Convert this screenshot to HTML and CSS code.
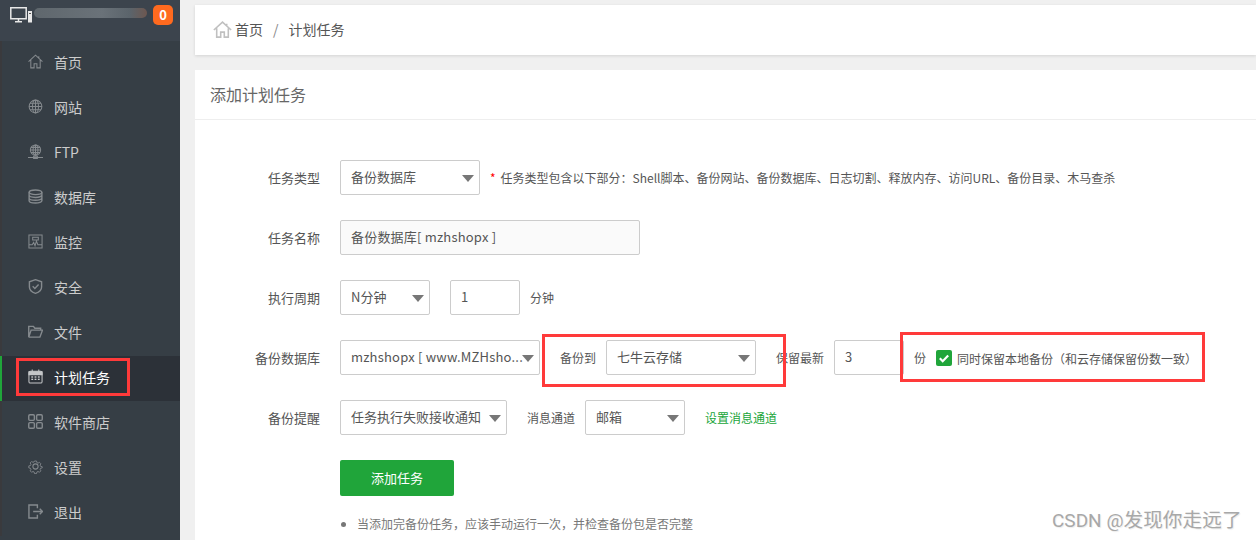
FILE: index.html
```html
<!DOCTYPE html>
<html>
  <head>
    <meta charset="utf-8">
    <title>计划任务</title>
    <link rel="stylesheet" href="styles.css">
  </head>
  <body>
    <div class="page">
      <aside class="sidebar">
        <div class="brand">
          <svg class="brand-icon" viewBox="0 0 22 16" width="22" height="16">
            <path d="M.8.800h15.400v11H.8z" fill="none" stroke="#e8e8e8" stroke-width="1.500"/>
            <path d="M5 14.800h7M8.500 12v2.500" stroke="#e8e8e8" stroke-width="1.500"/>
            <rect x="18" y="4" width="4" height="11.500" fill="#e8e8e8"/>
            <rect x="19" y="6" width="2" height="1" fill="#555"/>
          </svg>
          <span class="brand-blur"></span>
          <span class="badge">0</span>
        </div>
        <nav class="menu">
          <a class="menu-item">
            <svg viewBox="0 0 16 16"><path d="M.6 8.200 8 1.300l7.400 6.900M3 6.500v8.300h3.500v-4.500h3v4.500H13V6.500M11.500 2.300v2"/></svg>
            <span>首页</span>
          </a>
          <a class="menu-item">
            <svg viewBox="0 0 16 16"><circle cx="8" cy="8" r="6.800"/><ellipse cx="8" cy="8" rx="3.200" ry="6.800"/><path d="M8 1.200v13.600M1.200 8h13.600M2.200 4.600h11.600M2.200 11.400h11.600"/></svg>
            <span>网站</span>
          </a>
          <a class="menu-item">
            <svg viewBox="0 0 16 16"><circle cx="8" cy="6.500" r="5.500"/><ellipse cx="8" cy="6.500" rx="2.600" ry="5.500"/><path d="M8 1v11M2.500 6.500h11M3.200 3.800h9.600M3.200 9.200h9.600M0 14.500h16"/><rect x="6" y="13" width="4" height="2.500"/></svg>
            <span>FTP</span>
          </a>
          <a class="menu-item">
            <svg class="bold" viewBox="0 0 16 16"><ellipse cx="8" cy="3.500" rx="6.800" ry="2.500"/><path d="M1.200 3.500v9c0 1.400 3 2.500 6.800 2.500s6.800-1.100 6.800-2.500v-9M1.200 6.500C1.200 7.900 4.200 9 8 9s6.800-1.100 6.800-2.500M1.200 9.500c0 1.400 3 2.500 6.800 2.500s6.800-1.100 6.800-2.500"/></svg>
            <span>数据库</span>
          </a>
          <a class="menu-item">
            <svg viewBox="0 0 16 16"><path d="M1 1h14v14H1zM1 11.500h3.500l1.500-2.500 1.500 3.500 1.500-5 1.500 4h4.500M5 3.500h6v3H5z"/></svg>
            <span>监控</span>
          </a>
          <a class="menu-item">
            <svg class="bold" viewBox="0 0 16 16"><path d="M8 .7l6.500 2.300v5.500c0 3.200-3 5.600-6.500 6.800-3.500-1.200-6.500-3.600-6.500-6.800V3zM5 7.800l2.300 2.300L11.300 5.800"/></svg>
            <span>安全</span>
          </a>
          <a class="menu-item">
            <svg class="bold" viewBox="0 0 16 16"><path d="M.8 14V2.500h5l1.500 2h6.200v2M.8 14h11.900l2.800-7.500H3.300L.8 14"/></svg>
            <span>文件</span>
          </a>
          <a class="menu-item active">
            <svg viewBox="0 0 16 16"><rect x="1" y="2.500" width="14" height="12.500" rx="1.500"/><path d="M4.500.5v3M11.500.5v3"/><path class="cal-fill" d="M1 3h14v3H1z"/><path class="cal-dots" d="M3.500 8.500h2M7 8.500h2M10.500 8.500h2M3.500 11h2M7 11h2M10.500 11h2"/></svg>
            <span>计划任务</span>
          </a>
          <a class="menu-item">
            <svg class="bold" viewBox="0 0 16 16"><rect x=".8" y=".8" width="6" height="6" rx="1.200"/><rect x="9.200" y=".8" width="6" height="6" rx="1.200"/><rect x=".8" y="9.200" width="6" height="6" rx="1.200"/><rect x="9.200" y="9.200" width="6" height="6" rx="1.200"/></svg>
            <span>软件商店</span>
          </a>
          <a class="menu-item">
            <svg viewBox="0 0 16 16"><path d="M6.700 1h2.600l.4 2 1.500.7 1.800-1 1.800 1.800-1 1.800.7 1.500 2 .4v1.600l-2 .4-.7 1.500 1 1.800-1.800 1.800-1.800-1-1.500.7-.4 2H6.700l-.4-2-1.500-.7-1.800 1-1.800-1.800 1-1.800-.7-1.500-2-.4V7.200l2-.4.700-1.500-1-1.800 1.800-1.800 1.800 1 1.500-.7z" transform="translate(1.300 1.300) scale(.84)"/><circle cx="8" cy="8" r="2.800"/></svg>
            <span>设置</span>
          </a>
          <a class="menu-item">
            <svg class="bold" viewBox="0 0 16 16"><path d="M10 4.500V1H1v14h9v-3.500M5.500 8h10M12.500 5l3 3-3 3"/></svg>
            <span>退出</span>
          </a>
        </nav>
      </aside>

      <main class="content">
        <div class="crumbs">
          <svg class="crumb-home" viewBox="0 0 18 16" width="19" height="17"><path d="M.8 8.500 9 1l8.200 7.500M3.500 6.800v8.400h3.800v-4.700h3.400v4.700h3.800V6.800M13 2.500v2.500"/></svg>
          <span class="crumb">首页</span>
          <span class="crumb-sep">/</span>
          <span class="crumb">计划任务</span>
        </div>

        <section class="card">
          <h2 class="card-title">添加计划任务</h2>
          <form class="task-form">
            <div class="row">
              <label class="row-label">任务类型</label>
              <div class="select w-140"><select><option>备份数据库</option></select></div>
              <p class="hint"><em>*</em>任务类型包含以下部分：Shell脚本、备份网站、备份数据库、日志切割、释放内存、访问URL、备份目录、木马查杀</p>
            </div>
            <div class="row">
              <label class="row-label">任务名称</label>
              <input class="field readonly latin w-300" type="text" value="备份数据库[ mzhshopx ]" readonly>
            </div>
            <div class="row">
              <label class="row-label">执行周期</label>
              <div class="select w-90"><select><option>N分钟</option></select></div>
              <input class="field w-70 gap-20" type="text" value="1">
              <span class="unit gap-10">分钟</span>
            </div>
            <div class="row">
              <label class="row-label">备份数据库</label>
              <div class="select w-200 latin"><select><option>mzhshopx [ www.MZHsho...</option></select></div>
              <span class="unit gap-20">备份到</span>
              <div class="select w-150 gap-10"><select><option>七牛云存储</option></select></div>
              <span class="unit gap-20">保留最新</span>
              <input class="field w-70 gap-10" type="text" value="3">
              <span class="unit gap-10">份</span>
              <label class="keep-local">
                <span class="check"><svg viewBox="0 0 16 16" width="16" height="16"><path d="M3.800 8.300l2.900 2.900 5.500-5.600" fill="none" stroke="#fff" stroke-width="2.200"/></svg></span>
                同时保留本地备份（和云存储保留份数一致）
              </label>
            </div>
            <div class="row">
              <label class="row-label">备份提醒</label>
              <div class="select w-167"><select><option>任务执行失败接收通知</option></select></div>
              <span class="unit gap-20">消息通道</span>
              <div class="select w-100 gap-10"><select><option>邮箱</option></select></div>
              <a class="link">设置消息通道</a>
            </div>
            <button class="btn-add" type="button">添加任务</button>
            <ul class="notes">
              <li>当添加完备份任务，应该手动运行一次，并检查备份包是否完整</li>
            </ul>
          </form>
        </section>
      </main>

      <div class="mark mark-menu"></div>
      <div class="mark mark-target"></div>
      <div class="mark mark-local"></div>
      <div class="watermark">CSDN @<span class="watermark-name">发现你走远了</span></div>
    </div>
  </body>
</html>
```

FILE: styles.css
```css
* {
  box-sizing: border-box;
}

html, body {
  height: 100%;
}

body {
  margin: 0;
  overflow: hidden;
  background-color: #f0f0f0;
  color: #555;
  font-family: "Noto Sans CJK SC", "Liberation Sans", sans-serif;
  font-size: 13px;
}

.page {
  position: relative;
  display: flex;
  height: 540px;
  overflow: hidden;
}

/* sidebar */
.sidebar {
  flex: 0 0 180px;
  width: 180px;
  background-color: #363e45;
}

.brand {
  display: flex;
  align-items: center;
  height: 41px;
  padding: 0 0 11px 10px;
  background-color: #3c444d;
}

.brand-blur {
  width: 113px;
  height: 10px;
  margin: 0 0 4px 2px;
  border-radius: 5px;
  background: linear-gradient(90deg, #5f676d, #6a7279 60%, #5b646b 85%, #6d5750);
}

.badge {
  width: 20px;
  height: 20px;
  margin-left: 6px;
  border-radius: 5px;
  background-color: #ff6a1f;
  color: #fff;
  font-size: 13px;
  font-weight: 700;
  line-height: 20px;
  text-align: center;
}

.menu-item {
  display: flex;
  align-items: center;
  height: 45px;
  padding: 0 0 4px 26px;
  border-left: 2px solid #3a3a3d;
  color: #ccc;
  font-size: 14px;
}

.menu-item svg {
  flex: none;
  width: 15px;
  height: 15px;
  margin-right: 11px;
  fill: none;
  stroke: #858a8e;
  stroke-width: 1.100;
}

.menu-item svg.bold {
  stroke-width: 1.500;
}

.menu-item.active {
  border-left-color: #20a53a;
  background-color: #2c3138;
  color: #fff;
}

.menu-item.active svg {
  stroke: #c4c6c8;
}

.menu-item .cal-fill {
  fill: #c4c6c8;
}

.menu-item .cal-dots {
  stroke: #fff;
  stroke-dasharray: 2 1;
}

/* content */
.content {
  flex: 1;
  min-width: 0;
  padding: 5px 0 0 15px;
}

.crumbs {
  display: flex;
  align-items: center;
  height: 50px;
  margin-bottom: 15px;
  padding: 0 0 2px 18px;
  background-color: #fff;
  box-shadow: 0 1px 3px rgba(0, 0, 0, .12);
  color: #555;
  font-size: 14px;
}

.crumb-home {
  margin-right: 3px;
  fill: none;
  stroke: #c0c0c0;
  stroke-width: 1.500;
}

.crumb-sep {
  margin: 0 10px;
  color: #888;
}

.card {
  height: 480px;
  background-color: #fff;
}

.card-title {
  height: 50px;
  margin: 0;
  padding-left: 15px;
  border-bottom: 1px solid #eee;
  color: #666;
  font-size: 16px;
  font-weight: 400;
  line-height: 48px;
}

.task-form {
  padding: 40px 0 0 15px;
}

.row {
  display: flex;
  align-items: center;
  height: 35px;
  margin-bottom: 25px;
}

.row-label {
  flex: none;
  width: 110px;
  margin-right: 20px;
  color: #555;
  text-align: right;
}

.select {
  position: relative;
  flex: none;
  height: 35px;
}

.select::after {
  content: "";
  position: absolute;
  top: 15px;
  right: 6px;
  border-top: 7px solid #777;
  border-left: 6px solid transparent;
  border-right: 6px solid transparent;
  pointer-events: none;
}

.select select {
  display: block;
  width: 100%;
  height: 100%;
  padding: 0 18px 2px 10px;
  border: 1px solid #ccc;
  border-radius: 2px;
  appearance: none;
  background-color: #fff;
  color: #555;
  font: inherit;
}

.select.latin select,
.field.latin {
  letter-spacing: .2px;
}

.select.latin select {
  padding-right: 0;
}

.field {
  flex: none;
  height: 35px;
  padding: 0 10px 2px;
  border: 1px solid #ccc;
  border-radius: 2px;
  color: #555;
  font: inherit;
}

.field.readonly {
  background-color: #fafafa;
}

.w-70 { width: 70px; }
.w-90 { width: 90px; }
.w-100 { width: 100px; }
.w-140 { width: 140px; }
.w-150 { width: 150px; }
.w-167 { width: 167px; }
.w-200 { width: 200px; }
.w-300 { width: 300px; }

.gap-10 { margin-left: 10px; }
.gap-20 { margin-left: 20px; }

.unit {
  flex: none;
  color: #555;
  font-size: 12px;
}

.hint {
  margin: 0 0 0 10px;
  color: #555;
  font-size: 12px;
  white-space: nowrap;
}

.hint em {
  margin-right: 5px;
  color: #f00;
  font-style: normal;
}

.keep-local {
  display: flex;
  align-items: center;
  margin-left: 10px;
  padding-top: 2px;
  color: #555;
  font-size: 12px;
  white-space: nowrap;
}

.check {
  display: block;
  width: 16px;
  height: 16px;
  margin: 0 5px 1px 0;
  border-radius: 2px;
  background-color: #20a53a;
}

.check svg {
  display: block;
}

.link {
  margin-left: 20px;
  color: #20a53a;
  font-size: 12px;
}

.btn-add {
  display: block;
  width: 114px;
  height: 36px;
  margin: 18px 0 0 130px;
  padding-bottom: 3px;
  border: 0;
  border-radius: 2px;
  background-color: #20a53a;
  color: #fff;
  font: inherit;
}

.notes {
  margin: 19px 0 0 130px;
  padding: 0 0 0 17px;
  color: #777;
  font-size: 12px;
  line-height: 18px;
}

/* annotations drawn over the screenshot */
.mark {
  position: absolute;
  border: 3px solid #ff3a3a;
}

.mark-menu {
  top: 358px;
  left: 16px;
  width: 114px;
  height: 38px;
}

.mark-target {
  top: 334px;
  left: 542px;
  width: 244px;
  height: 53px;
}

.mark-local {
  top: 332px;
  left: 900px;
  width: 305px;
  height: 50px;
}

.watermark {
  position: absolute;
  top: 507px;
  left: 1052px;
  color: #a8a8a8;
  font-family: Roboto, "Noto Sans CJK SC", sans-serif;
  font-size: 19px;
  line-height: 28px;
  text-shadow: 1px 1px 1px rgba(0, 0, 0, .08);
  white-space: nowrap;
}

.watermark-name {
  font-size: 19.700px;
}
```
